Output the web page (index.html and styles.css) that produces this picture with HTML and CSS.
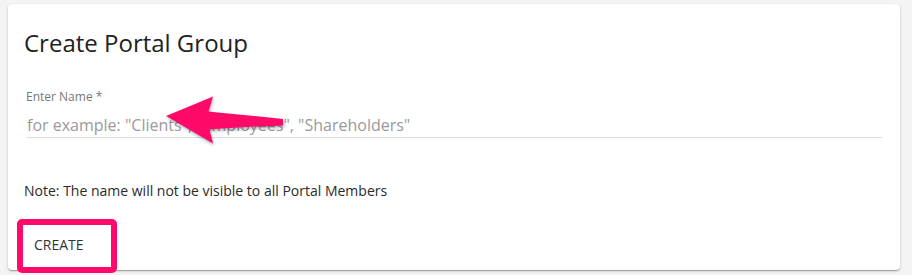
FILE: index.html
```html
<!DOCTYPE html>
<html>
<head>
<meta charset="utf-8">
<link rel="stylesheet" href="styles.css">
</head>
<body>
<div class="page">
  <div class="card">
    <h1 class="title">Create Portal Group</h1>
    <div class="field">
      <label class="label" for="name">Enter Name *</label>
      <input class="input" id="name" type="text" placeholder="for example: &quot;Clients&quot;, &quot;Employees&quot;, &quot;Shareholders&quot;">
    </div>
    <p class="note">Note: The name will not be visible to all Portal Members</p>
    <div class="actions">
      <button class="btn" type="button">CREATE</button>
    </div>
  </div>
  <div class="highlight"></div>
  <svg class="arrow" width="912" height="275" viewBox="0 0 912 275">
    <path d="M166,116 L213,96.5 L208.5,111.5 Q240,114.5 283,119 L283,125.5 Q240,127 209.5,129.5 L213,143.5 Z" fill="#ff0a68"/>
  </svg>
</div>
</body>
</html>
```
FILE: styles.css
```css
* { box-sizing: border-box; }
html, body { margin: 0; padding: 0; }
body {
  background: #f4f4f4;
  font-family: "Open Sans", "Noto Sans", sans-serif;
  width: 912px;
  height: 275px;
  overflow: hidden;
}
.page {
  position: relative;
  padding: 4px 12px 0 8px;
  height: 275px;
}
.card {
  background: #fff;
  border-radius: 4px;
  height: 266px;
  box-shadow: 0 1px 3px rgba(0,0,0,.2), 0 1px 1px rgba(0,0,0,.14), 0 2px 1px -1px rgba(0,0,0,.12);
  padding: 23px 16px 0 16px;
}
.title {
  margin: 0;
  font-size: 24px;
  line-height: 32px;
  font-weight: 400;
  color: #222;
}
.field {
  margin: 30px 2px 0 2px;
  display: flex;
  flex-direction: column;
}
.label {
  font-size: 12px;
  line-height: 16px;
  color: #777;
}
.input {
  margin-top: 8px;
  border: none;
  border-bottom: 1px solid #dcdcdc;
  outline: none;
  padding: 0 0 0 1px;
  height: 25px;
  font-family: inherit;
  font-size: 16px;
  line-height: 24px;
  color: #333;
  background: transparent;
}
.input::placeholder { color: #9a9a9a; opacity: 1; }
.note {
  margin: 43px 0 0 0;
  font-size: 14px;
  line-height: 20px;
  color: #2b2b2b;
}
.actions {
  margin-top: 32px;
}
.btn {
  font-family: inherit;
  font-size: 14px;
  line-height: 20px;
  color: #333;
  background: transparent;
  border: none;
  padding: 0 0 0 10px;
  cursor: pointer;
}
.highlight {
  position: absolute;
  left: 17px;
  top: 219px;
  width: 100px;
  height: 54px;
  border: 6px solid #ff0a68;
  border-radius: 5px;
}
.arrow {
  position: absolute;
  left: 0;
  top: 0;
  filter: drop-shadow(1px 2px 1.5px rgba(0,0,0,.3));
  pointer-events: none;
}
```
